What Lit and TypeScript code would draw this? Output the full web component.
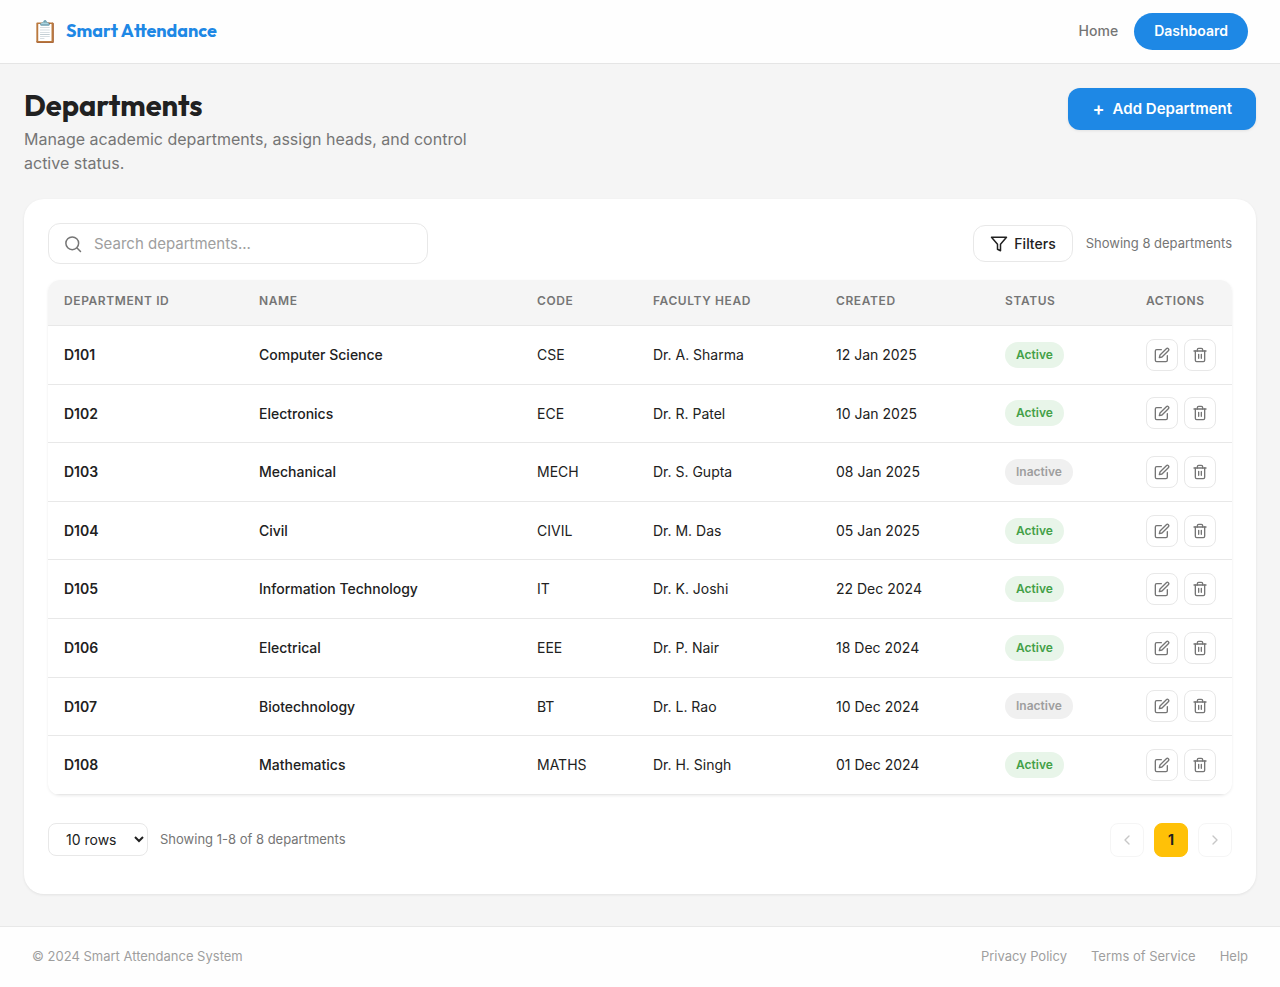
import { LitElement, html, css } from "lit";
import { customElement, state } from "lit/decorators.js";

interface Department {
  id: string;
  name: string;
  code: string;
  head: string;
  created: string;
  active: boolean;
}

const DEPARTMENTS: Department[] = [
  { id: "D101", name: "Computer Science", code: "CSE", head: "Dr. A. Sharma", created: "12 Jan 2025", active: true },
  { id: "D102", name: "Electronics", code: "ECE", head: "Dr. R. Patel", created: "10 Jan 2025", active: true },
  { id: "D103", name: "Mechanical", code: "MECH", head: "Dr. S. Gupta", created: "08 Jan 2025", active: false },
  { id: "D104", name: "Civil", code: "CIVIL", head: "Dr. M. Das", created: "05 Jan 2025", active: true },
  { id: "D105", name: "Information Technology", code: "IT", head: "Dr. K. Joshi", created: "22 Dec 2024", active: true },
  { id: "D106", name: "Electrical", code: "EEE", head: "Dr. P. Nair", created: "18 Dec 2024", active: true },
  { id: "D107", name: "Biotechnology", code: "BT", head: "Dr. L. Rao", created: "10 Dec 2024", active: false },
  { id: "D108", name: "Mathematics", code: "MATHS", head: "Dr. H. Singh", created: "01 Dec 2024", active: true },
];

const searchIcon = html`<svg class="icon search-icon" width="18" height="18" viewBox="0 0 24 24" aria-hidden="true">
  <circle cx="11" cy="11" r="8.5"></circle><path d="M22 22l-4.6-4.6"></path>
</svg>`;
const filterIcon = html`<svg class="icon" width="18" height="18" viewBox="0 0 24 24" aria-hidden="true">
  <path d="M22 3H2l8 9.460V19l4 2v-8.540z"></path>
</svg>`;
const editIcon = html`<svg class="icon" width="16" height="16" viewBox="0 0 24 24" aria-hidden="true">
  <path d="M11 4H4a2 2 0 0 0-2 2v14a2 2 0 0 0 2 2h14a2 2 0 0 0 2-2v-7"></path>
  <path d="M18.500 2.500a2.121 2.121 0 0 1 3 3L12 15l-4 1 1-4z"></path>
</svg>`;
const trashIcon = html`<svg class="icon" width="16" height="16" viewBox="0 0 24 24" aria-hidden="true">
  <path d="M3 6h18"></path>
  <path d="M19 6v14a2 2 0 0 1-2 2H7a2 2 0 0 1-2-2V6m3 0V4a2 2 0 0 1 2-2h4a2 2 0 0 1 2 2v2"></path>
  <path d="M10 11v6M14 11v6"></path>
</svg>`;
const prevIcon = html`<svg class="icon" width="16" height="16" viewBox="0 0 24 24" aria-hidden="true"><path d="M15 18l-6-6 6-6"></path></svg>`;
const nextIcon = html`<svg class="icon" width="16" height="16" viewBox="0 0 24 24" aria-hidden="true"><path d="M9 18l6-6-6-6"></path></svg>`;

@customElement("app-root")
export class AppRoot extends LitElement {
  @state() private query = "";

  static styles = css`
    :host {
      display: flex;
      flex-direction: column;
      min-height: 100vh;
      background: #f5f5f5;
      color: #212121;
      font-family: Inter, "Liberation Sans", sans-serif;
      font-size: 14px;
    }
    * { box-sizing: border-box; }
    a { color: inherit; text-decoration: none; }
    button, input, select { font-family: inherit; color: inherit; margin: 0; }
    button { cursor: pointer; }
    .icon {
      display: block;
      fill: none;
      stroke: currentColor;
      stroke-width: 2;
      stroke-linecap: round;
      stroke-linejoin: round;
      flex: none;
    }
    .topbar {
      display: flex;
      align-items: center;
      justify-content: space-between;
      height: 64px;
      padding: 0 32px;
      background: #fefefe;
      border-bottom: 1px solid #e5e5e5;
    }
    .brand {
      display: flex;
      align-items: center;
      gap: 8px;
      padding-bottom: 1px;
      color: #1e88e5;
      font: 700 18px/24px Outfit, Lato, sans-serif;
    }
    .brand-mark { font-size: 21px; }
    .nav { display: flex; align-items: center; gap: 16px; color: #757575; font-weight: 500; line-height: 20px; }
    .nav a { padding: 8px 0 9px; }
    .nav .nav-active {
      padding: 8px 20px 9px;
      border-radius: 20px;
      background: #1e88e5;
      color: #fff;
      font-weight: 600;
    }
    main { flex: 1; padding: 24px 24px 32px; }
    .page-head {
      display: flex;
      align-items: flex-start;
      justify-content: space-between;
      gap: 24px;
      margin-bottom: 24px;
    }
    h1 { margin: 0 0 4px; font: 700 29px/35px Outfit, Lato, sans-serif; }
    .lead { margin: 0; max-width: 480px; color: #757575; font-size: 16px; line-height: 24px; }
    .add {
      display: flex;
      align-items: center;
      gap: 8px;
      height: 42px;
      padding: 0 24px 1px;
      border: 0;
      border-radius: 12px;
      background: #1e88e5;
      color: #fff;
      font-size: 15px;
      font-weight: 600;
      box-shadow: 0 1px 3px rgba(0, 0, 0, 0.08);
      white-space: nowrap;
    }
    .add-plus { font-size: 18px; line-height: 20px; }
    .card {
      padding: 24px 24px 37px;
      border-radius: 20px;
      background: #fff;
      box-shadow: 0 1px 3px rgba(0, 0, 0, 0.08);
    }
    .toolbar { display: flex; align-items: center; justify-content: space-between; gap: 16px; margin-bottom: 16px; }
    .search {
      display: flex;
      align-items: center;
      flex: 0 1 380px;
      gap: 12px;
      height: 41px;
      padding: 0 16px 0 15px;
      border: 1px solid #e8e8e8;
      border-radius: 12px;
    }
    .search-icon { color: #757575; }
    .search-input { flex: 1; min-width: 0; padding: 0; border: 0; outline: 0; background: none; font-size: 15px; }
    .search-input::placeholder { color: #9e9e9e; opacity: 1; }
    .toolbar-side { display: flex; align-items: center; gap: 13px; }
    .filters {
      display: flex;
      align-items: center;
      gap: 6px;
      height: 37px;
      padding: 0 16px;
      border: 1px solid #e8e8e8;
      border-radius: 12px;
      background: #fff;
      font-size: 14px;
      font-weight: 500;
    }
    .count { padding-bottom: 1px; color: #757575; font-size: 13px; }
    .table-wrap { overflow: hidden; border-radius: 12px; box-shadow: 0 1px 3px rgba(0, 0, 0, 0.08); }
    table { width: 100%; border-collapse: separate; border-spacing: 0; }
    th {
      padding: 11px 16px 14px;
      background: #f5f5f5;
      border-bottom: 1px solid #e8e8e8;
      color: #757575;
      font-size: 12px;
      font-weight: 600;
      line-height: 20px;
      letter-spacing: 0.05em;
      text-align: left;
      text-transform: uppercase;
      white-space: nowrap;
    }
    td { padding: 12px 16px; border-bottom: 1px solid #e8e8e8; line-height: 2.4; white-space: nowrap; }
    .col-id { width: 195px; }
    .col-name { width: 278px; }
    .col-code { width: 116px; }
    .col-head { width: 183px; }
    .col-created { width: 169px; }
    .col-status { width: 141px; }
    .col-actions { width: 102px; }
    td.col-id { font-weight: 600; }
    td.col-name { font-weight: 500; }
    .badge {
      display: block;
      width: fit-content;
      padding: 3px 11px;
      border-radius: 14px;
      background: #f0f0f0;
      color: #9e9e9e;
      font-size: 12px;
      font-weight: 600;
      line-height: 20px;
    }
    .badge-active { background: #e8f5e9; color: #43a047; }
    .actions { display: flex; gap: 6px; }
    .square {
      display: grid;
      place-items: center;
      width: 32px;
      height: 32px;
      padding: 0;
      border: 1px solid #e8e8e8;
      border-radius: 8px;
      background: #fff;
      color: #757575;
    }
    .pager { display: flex; align-items: center; justify-content: space-between; margin-top: 28px; }
    .pager-info { display: flex; align-items: center; gap: 12px; }
    .rows {
      width: 100px;
      height: 33px;
      padding: 0 0 0 13px;
      border: 1px solid #e8e8e8;
      border-radius: 8px;
      background: #fff;
      font-size: 14px;
    }
    .pages { display: flex; gap: 10px; }
    .page { width: 34px; height: 34px; font-size: 14px; font-weight: 700; }
    .page:disabled { opacity: 0.4; cursor: default; }
    .page-current { border-color: #ffc107; background: #ffc107; color: #212121; }
    footer {
      display: flex;
      align-items: center;
      justify-content: space-between;
      padding: 19px 32px 21px;
      border-top: 1px solid #e8e8e8;
      background: #fefefe;
      color: #9e9e9e;
      font-size: 13px;
      line-height: 20px;
    }
    .links { display: flex; gap: 24px; }
  `;

  private get visible(): Department[] {
    const q = this.query.trim().toLowerCase();
    return DEPARTMENTS.filter((d) => `${d.id} ${d.name} ${d.code} ${d.head}`.toLowerCase().includes(q));
  }

  private row(d: Department) {
    return html`<tr>
      <td class="col-id">${d.id}</td>
      <td class="col-name">${d.name}</td>
      <td>${d.code}</td>
      <td>${d.head}</td>
      <td>${d.created}</td>
      <td><span class="badge ${d.active ? "badge-active" : ""}">${d.active ? "Active" : "Inactive"}</span></td>
      <td class="col-actions">
        <div class="actions">
          <button class="square" type="button" aria-label="Edit ${d.name}">${editIcon}</button>
          <button class="square" type="button" aria-label="Delete ${d.name}">${trashIcon}</button>
        </div>
      </td>
    </tr>`;
  }

  render() {
    const rows = this.visible;
    return html`
      <header class="topbar">
        <a class="brand" href="#"><span class="brand-mark">📋</span><span>Smart Attendance</span></a>
        <nav class="nav"><a href="#">Home</a><a class="nav-active" href="#">Dashboard</a></nav>
      </header>
      <main>
        <div class="page-head">
          <div>
            <h1>Departments</h1>
            <p class="lead">Manage academic departments, assign heads, and control active status.</p>
          </div>
          <button class="add" type="button"><span class="add-plus">+</span><span>Add Department</span></button>
        </div>
        <section class="card">
          <div class="toolbar">
            <label class="search">
              ${searchIcon}
              <input
                class="search-input"
                type="text"
                aria-label="Search departments"
                placeholder="Search departments..."
                .value=${this.query}
                @input=${(e: Event) => (this.query = (e.target as HTMLInputElement).value)}
              />
            </label>
            <div class="toolbar-side">
              <button class="filters" type="button">${filterIcon}<span>Filters</span></button>
              <span class="count">Showing ${rows.length} departments</span>
            </div>
          </div>
          <div class="table-wrap">
            <table>
              <thead>
                <tr>
                  <th class="col-id">Department ID</th>
                  <th class="col-name">Name</th>
                  <th class="col-code">Code</th>
                  <th class="col-head">Faculty Head</th>
                  <th class="col-created">Created</th>
                  <th class="col-status">Status</th>
                  <th class="col-actions">Actions</th>
                </tr>
              </thead>
              <tbody>${rows.map((d) => this.row(d))}</tbody>
            </table>
          </div>
          <div class="pager">
            <div class="pager-info">
              <select class="rows" aria-label="Rows per page">
                <option>10 rows</option>
                <option>25 rows</option>
                <option>50 rows</option>
              </select>
              <span class="count">Showing 1-${rows.length} of ${rows.length} departments</span>
            </div>
            <div class="pages">
              <button class="square page" type="button" aria-label="Previous page" disabled>${prevIcon}</button>
              <button class="square page page-current" type="button" aria-current="page">1</button>
              <button class="square page" type="button" aria-label="Next page" disabled>${nextIcon}</button>
            </div>
          </div>
        </section>
      </main>
      <footer>
        <span>© 2024 Smart Attendance System</span>
        <nav class="links"><a href="#">Privacy Policy</a><a href="#">Terms of Service</a><a href="#">Help</a></nav>
      </footer>
    `;
  }
}
